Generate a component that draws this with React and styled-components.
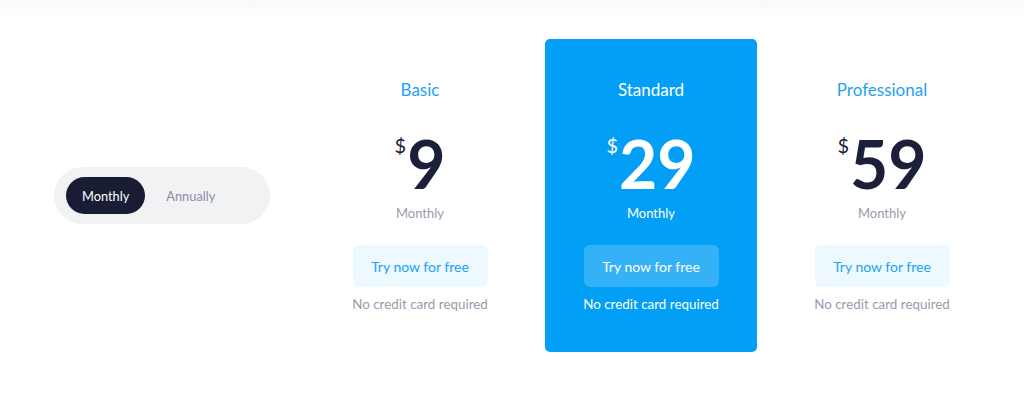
import React, { useState } from 'react';
import styled, { createGlobalStyle } from 'styled-components';

const GlobalStyle = createGlobalStyle`
  body {
    margin: 0;
    background: #ffffff;
    font-family: Lato, "Open Sans", "Liberation Sans", sans-serif;
    -webkit-font-smoothing: antialiased;
  }
`;

const TopShade = styled.div`
  height: 20px;
  background: linear-gradient(to bottom, #f9f9f9, #ffffff);
`;

const Section = styled.section`
  display: flex;
  align-items: center;
  gap: 44px;
  padding: 19px 0 0 54px;
`;

const Toggle = styled.div`
  display: flex;
  align-items: center;
  gap: 5px;
  width: 216px;
  box-sizing: border-box;
  padding: 10px 12px;
  background: #f1f2f4;
  border-radius: 29px;
`;

const ToggleButton = styled.button`
  height: 37px;
  padding: 0 16px;
  border: 0;
  border-radius: 19px;
  font-family: inherit;
  font-size: 12.8px;
  cursor: pointer;
  background: ${p => (p.$active ? '#181d35' : 'transparent')};
  color: ${p => (p.$active ? '#ffffff' : '#8f8aa8')};
`;

const Plans = styled.div`
  display: grid;
  grid-template-columns: repeat(3, 212px);
  gap: 19px;
`;

const Card = styled.div`
  display: flex;
  flex-direction: column;
  align-items: center;
  height: 313px;
  box-sizing: border-box;
  padding-top: 41px;
  border-radius: 5px;
  background: ${p => (p.$featured ? '#039ff6' : 'transparent')};
`;

const Title = styled.h3`
  margin: 0;
  font-size: 17px;
  line-height: 20px;
  font-weight: 400;
  color: ${p => (p.$featured ? '#ffffff' : '#1ea2f3')};
`;

const Price = styled.div`
  display: flex;
  align-items: flex-start;
  gap: 1px;
  margin-top: 31px;
  color: ${p => (p.$featured ? '#ffffff' : '#1b1f3a')};
`;

const Currency = styled.span`
  font-size: 20px;
  line-height: 20px;
  margin-top: 4px;
`;

const Amount = styled.span`
  font-size: 66px;
  line-height: 66px;
  font-weight: 700;
`;

const Period = styled.div`
  margin-top: 8px;
  font-size: 13px;
  line-height: 16px;
  color: ${p => (p.$featured ? '#ffffff' : '#9a9aad')};
`;

const TryButton = styled.button`
  margin-top: 24px;
  width: 135px;
  height: 42px;
  border: 0;
  border-radius: 6px;
  font-family: inherit;
  font-size: 14px;
  cursor: pointer;
  background: ${p => (p.$featured ? 'rgba(255, 255, 255, 0.2)' : '#eef8ff')};
  color: ${p => (p.$featured ? '#ffffff' : '#1ea2f3')};
`;

const Note = styled.div`
  margin-top: 9px;
  font-size: 13.4px;
  line-height: 17px;
  color: ${p => (p.$featured ? '#ffffff' : '#9a9aad')};
`;

const plans = [
  { name: 'Basic', price: 9 },
  { name: 'Standard', price: 29, featured: true },
  { name: 'Professional', price: 59 },
];

const App = () => {
  const [period, setPeriod] = useState('monthly');

  return (
    <>
      <GlobalStyle />
      <TopShade />
      <Section>
        <Toggle>
          <ToggleButton $active={period === 'monthly'} onClick={() => setPeriod('monthly')}>
            Monthly
          </ToggleButton>
          <ToggleButton $active={period === 'annually'} onClick={() => setPeriod('annually')}>
            Annually
          </ToggleButton>
        </Toggle>
        <Plans>
          {plans.map(plan => (
            <Card key={plan.name} $featured={plan.featured}>
              <Title $featured={plan.featured}>{plan.name}</Title>
              <Price $featured={plan.featured}>
                <Currency>$</Currency>
                <Amount>{plan.price}</Amount>
              </Price>
              <Period $featured={plan.featured}>Monthly</Period>
              <TryButton $featured={plan.featured}>Try now for free</TryButton>
              <Note $featured={plan.featured}>No credit card required</Note>
            </Card>
          ))}
        </Plans>
      </Section>
    </>
  );
};

export default App;
